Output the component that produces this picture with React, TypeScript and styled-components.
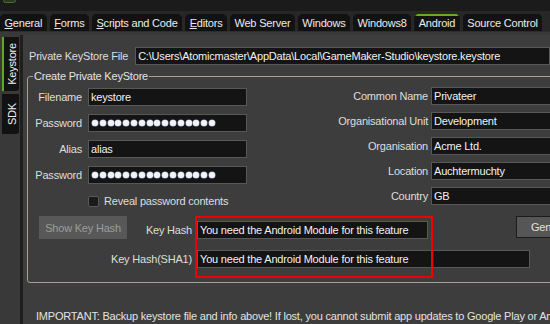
import React from 'react';
import styled, { createGlobalStyle, css } from 'styled-components';

const GlobalStyle = createGlobalStyle`
  html, body {
    margin: 0;
    padding: 0;
    background: #3d3d3d;
  }
  body {
    font-family: 'Liberation Sans', Arial, sans-serif;
    font-size: 11px;
    letter-spacing: -0.2px;
    color: #dedede;
  }
`;

const Window = styled.div`
  width: 550px;
  height: 324px;
  overflow: hidden;
  display: flex;
  flex-direction: column;
  background: #3d3d3d;
`;

const TitleBar = styled.div`
  height: 11px;
  flex-shrink: 0;
  display: flex;
  align-items: flex-end;
  gap: 5px;
  padding-left: 3px;
  background: #1b1b1b;
  overflow: hidden;
`;

const TitleIcon = styled.svg`
  width: 13px;
  height: 13px;
  margin-bottom: 8px;
  flex-shrink: 0;
`;

const TitleText = styled.span`
  font-size: 15px;
  line-height: 15px;
  letter-spacing: 0;
  color: #ffffff;
  margin-bottom: 10px;
`;

const TabStrip = styled.div`
  height: 20px;
  flex-shrink: 0;
  display: flex;
  align-items: flex-end;
  gap: 3px;
  background: #272727;
`;

const Tab = styled.div<{ $active?: boolean }>`
  height: 17px;
  padding: 0 4.5px;
  line-height: 18px;
  background: #121212;
  color: #ececec;
  white-space: nowrap;
  clip-path: polygon(3px 0, calc(100% - 3px) 0, 100% 3px, 100% 100%, 0 100%, 0 3px);
  ${({ $active }) =>
    $active &&
    css`
      box-shadow: inset 0 2px 0 #63ad24;
    `}
`;

const TabBase = styled.div`
  height: 4px;
  flex-shrink: 0;
  background: #393939;
  border-top: 1px solid #2e2e2e;
  box-sizing: border-box;
`;

const Body = styled.div`
  flex: 1;
  display: flex;
  min-height: 0;
`;

const SideRail = styled.div`
  width: 20px;
  flex-shrink: 0;
  display: flex;
  flex-direction: column;
  gap: 3px;
  padding-top: 2px;
  background: #393939;
`;

const SideTab = styled.div<{ $active?: boolean; $height: number }>`
  width: 17px;
  height: ${({ $height }) => $height}px;
  box-sizing: border-box;
  margin-left: 2px;
  display: flex;
  align-items: center;
  justify-content: center;
  background: #121212;
  border-radius: 0 0 3px 0;
  border-left: 2px solid ${({ $active }) => ($active ? '#5fa828' : '#121212')};
`;

const SideTabLabel = styled.span`
  writing-mode: vertical-rl;
  transform: rotate(180deg);
  color: #f0f0f0;
  white-space: nowrap;
`;

const Divider = styled.div`
  width: 3px;
  flex-shrink: 0;
  background: #1f1f1f;
`;

const Content = styled.div`
  flex: 1;
  padding: 12px 0 0 4px;
  min-width: 0;
`;

const PathRow = styled.div`
  display: flex;
  align-items: center;
  gap: 7px;
  padding-left: 2px;
`;

const Label = styled.span<{ $align?: 'left' | 'right' }>`
  white-space: nowrap;
  line-height: 18px;
  text-align: ${({ $align }) => $align ?? 'left'};
  color: #dedede;
`;

const Field = styled.div<{ $width: number }>`
  width: ${({ $width }) => $width}px;
  height: 18px;
  box-sizing: border-box;
  padding: 0 2px;
  border: 1px solid #585858;
  background: #141414;
  color: #f2f2f2;
  line-height: 16px;
  white-space: nowrap;
  overflow: hidden;
  display: flex;
  align-items: center;
`;

const Dot = styled.span`
  width: 6px;
  height: 6px;
  margin-right: 1.8px;
  border-radius: 50%;
  background: #f3f3f3;
  box-shadow: 0 0 0 0.5px #9fb4d8;
  flex-shrink: 0;
`;

const GroupBox = styled.fieldset`
  margin: 5px 0 0 0;
  padding: 5px 0 14px 0;
  width: 600px;
  min-inline-size: 0;
  box-sizing: border-box;
  border: 1px solid #a6a193;
  border-radius: 3px;
`;

const Legend = styled.legend`
  margin-left: 5px;
  padding: 0 1px;
  line-height: 13px;
  color: #e2e2e2;
`;

const Columns = styled.div`
  display: flex;
  align-items: flex-start;
`;

const LeftColumn = styled.div`
  display: flex;
  flex-direction: column;
`;

const FormGrid = styled.div<{ $labelWidth: number; $gap: number; $rowGap: number }>`
  display: grid;
  grid-template-columns: ${({ $labelWidth }) => $labelWidth}px auto;
  column-gap: ${({ $gap }) => $gap}px;
  row-gap: ${({ $rowGap }) => $rowGap}px;
  align-items: center;
`;

const RightForm = styled(FormGrid)`
  margin-left: 81px;
  margin-top: -1px;
`;

const CheckRow = styled.label`
  margin: 12px 0 0 60px;
  display: flex;
  align-items: center;
  gap: 5px;
  height: 11px;
  line-height: 11px;
  white-space: nowrap;
`;

const CheckBox = styled.span`
  width: 11px;
  height: 11px;
  box-sizing: border-box;
  border: 1px solid #5a5a5a;
  border-radius: 2px;
  background: #1a1a1a;
`;

const HashGrid = styled.div`
  position: relative;
  margin: 9px 0 0 11px;
  display: grid;
  grid-template-columns: 88px 70px 231px 88px auto;
  grid-template-rows: 23px 18px;
  row-gap: 11px;
`;

const HashLabel = styled(Label)<{ $wide?: boolean }>`
  grid-column: ${({ $wide }) => ($wide ? '1 / span 2' : '2')};
  padding-right: 5px;
  align-self: end;
`;

const HashField = styled(Field)<{ $span?: number }>`
  grid-column: 3 / span ${({ $span }) => $span ?? 1};
  align-self: end;
`;

const FlatButton = styled.div`
  grid-column: 1;
  height: 23px;
  display: flex;
  align-items: center;
  justify-content: center;
  background: #585858;
  color: #9c9c9c;
  white-space: nowrap;
`;

const GenButton = styled.div`
  grid-column: 5;
  height: 22px;
  box-sizing: border-box;
  padding: 0 14px;
  display: flex;
  align-items: center;
  background: #565656;
  border: 1px solid #1c1c1c;
  color: #e0e0e0;
  white-space: nowrap;
`;

const Highlight = styled.div`
  position: absolute;
  left: 156px;
  top: 0;
  width: 238px;
  height: 62px;
  box-sizing: border-box;
  border: 2px solid #f00000;
  pointer-events: none;
`;

const Important = styled.div`
  margin-top: 27px;
  padding-left: 9px;
  line-height: 13px;
  white-space: nowrap;
  color: #e2e2e2;
`;

const tabs = [
  { label: 'General', key: 'G' },
  { label: 'Forms', key: 'F' },
  { label: 'Scripts and Code', key: 'S' },
  { label: 'Editors', key: 'E' },
  { label: 'Web Server' },
  { label: 'Windows' },
  { label: 'Windows8' },
  { label: 'Android', active: true },
  { label: 'Source Control' },
];

const Password: React.FC<{ count: number }> = ({ count }) => (
  <Field $width={159} style={{ paddingLeft: 3 }}>
    {Array.from({ length: count }, (_, i) => (
      <Dot key={i} />
    ))}
  </Field>
);

const App: React.FC = () => {
  return (
    <Window>
      <GlobalStyle />
      <TitleBar>
        <TitleIcon viewBox='0 0 13 13'>
          <rect x='0.5' y='0.5' width='12' height='12' rx='2' fill='#2b3a1e' stroke='#4f6b2c' />
          <path d='M3 9 L6.5 3 L10 9 Z' fill='#7fb03a' />
        </TitleIcon>
        <TitleText>Preferences</TitleText>
      </TitleBar>

      <TabStrip>
        {tabs.map((t) => (
          <Tab key={t.label} $active={t.active}>
            {t.key ? (
              <>
                <u>{t.key}</u>
                {t.label.slice(1)}
              </>
            ) : (
              t.label
            )}
          </Tab>
        ))}
      </TabStrip>
      <TabBase />

      <Body>
        <SideRail>
          <SideTab $active $height={54}>
            <SideTabLabel>Keystore</SideTabLabel>
          </SideTab>
          <SideTab $height={40}>
            <SideTabLabel>SDK</SideTabLabel>
          </SideTab>
        </SideRail>
        <Divider />

        <Content>
          <PathRow>
            <Label>Private KeyStore File</Label>
            <Field $width={420}>C:\Users\Atomicmaster\AppData\Local\GameMaker-Studio\keystore.keystore</Field>
          </PathRow>

          <GroupBox>
            <Legend>Create Private KeyStore</Legend>
            <Columns>
              <LeftColumn>
                <FormGrid $labelWidth={54} $gap={6} $rowGap={8}>
                  <Label $align='right'>Filename</Label>
                  <Field $width={159}>keystore</Field>
                  <Label $align='right'>Password</Label>
                  <Password count={16} />
                  <Label $align='right'>Alias</Label>
                  <Field $width={159}>alias</Field>
                  <Label $align='right'>Password</Label>
                  <Password count={16} />
                </FormGrid>
                <CheckRow>
                  <CheckBox />
                  Reveal password contents
                </CheckRow>
              </LeftColumn>

              <RightForm $labelWidth={100} $gap={3} $rowGap={7}>
                <Label $align='right'>Common Name</Label>
                <Field $width={140}>Privateer</Field>
                <Label $align='right'>Organisational Unit</Label>
                <Field $width={140}>Development</Field>
                <Label $align='right'>Organisation</Label>
                <Field $width={140}>Acme Ltd.</Field>
                <Label $align='right'>Location</Label>
                <Field $width={140}>Auchtermuchty</Field>
                <Label $align='right'>Country</Label>
                <Field $width={140}>GB</Field>
              </RightForm>
            </Columns>

            <HashGrid>
              <FlatButton>Show Key Hash</FlatButton>
              <HashLabel $align='right'>Key Hash</HashLabel>
              <HashField $width={231}>You need the Android Module for this feature</HashField>
              <GenButton>Generate</GenButton>
              <HashLabel $align='right' $wide>
                Key Hash(SHA1)
              </HashLabel>
              <HashField $width={333} $span={3}>
                You need the Android Module for this feature
              </HashField>
              <Highlight />
            </HashGrid>
          </GroupBox>

          <Important>
            IMPORTANT: Backup keystore file and info above! If lost, you cannot submit app updates to Google Play or Amazon
          </Important>
        </Content>
      </Body>
    </Window>
  );
};

export default App;
